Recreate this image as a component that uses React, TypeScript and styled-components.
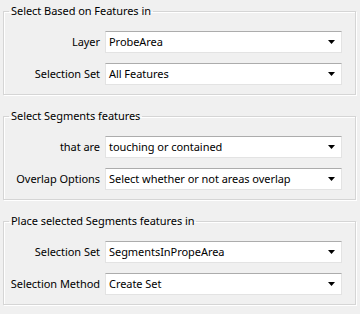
import React from "react";
import styled, { createGlobalStyle } from "styled-components";

const Global = createGlobalStyle`
  html, body { margin: 0; padding: 0; background: #f0f0f0; }
  body { font-family: "Noto Sans", "Open Sans", sans-serif; font-size: 11px; letter-spacing: -0.05px; color: #000; }
`;

const Page = styled.div`
  width: 360px;
  height: 314px;
  box-sizing: border-box;
  padding: 3px 4px 0 3px;
  display: flex;
  flex-direction: column;
  gap: 13px;
  background: #f0f0f0;
  overflow: hidden;
`;

const Group = styled.fieldset`
  margin: 0;
  padding: 12px 13px 13px 0;
  border: 1px solid #d5d5d5;
  box-shadow: inset 1px 1px 0 #fff, 1px 1px 0 #fff;
  min-width: 0;
  height: 92px;
  box-sizing: border-box;
`;

const Title = styled.legend`
  margin-left: 5px;
  padding: 0 2px;
  line-height: 16px;
`;

const Form = styled.div`
  display: grid;
  grid-template-columns: 96px 1fr;
  column-gap: 5px;
  row-gap: 10px;
  align-items: center;
`;

const Label = styled.span`
  text-align: right;
  white-space: nowrap;
  line-height: 22px;
`;

const Select = styled.div`
  position: relative;
  height: 22px;
  box-sizing: border-box;
  background: #fff;
  border: 1px solid #e3e3e3;
  border-top-color: #acacac;
  padding: 0 20px 0 3px;
  line-height: 20px;
  white-space: nowrap;
  overflow: hidden;
`;

const Arrow = styled.svg`
  position: absolute;
  right: 6px;
  top: 8px;
`;

type Field = { label: string; value: string };

const groups: { title: string; fields: Field[] }[] = [
  {
    title: "Select Based on Features in",
    fields: [
      { label: "Layer", value: "ProbeArea" },
      { label: "Selection Set", value: "All Features" },
    ],
  },
  {
    title: "Select Segments features",
    fields: [
      { label: "that are", value: "touching or contained" },
      { label: "Overlap Options", value: "Select whether or not areas overlap" },
    ],
  },
  {
    title: "Place selected Segments features in",
    fields: [
      { label: "Selection Set", value: "SegmentsInPropeArea" },
      { label: "Selection Method", value: "Create Set" },
    ],
  },
];

export default function App() {
  return (
    <>
      <Global />
      <Page>
        {groups.map((g) => (
          <Group key={g.title}>
            <Title>{g.title}</Title>
            <Form>
              {g.fields.map((f) => (
                <React.Fragment key={f.label}>
                  <Label>{f.label}</Label>
                  <Select>
                    {f.value}
                    <Arrow width="7" height="4" viewBox="0 0 7 4">
                      <path d="M0 0H7L3.5 4Z" fill="#000" />
                    </Arrow>
                  </Select>
                </React.Fragment>
              ))}
            </Form>
          </Group>
        ))}
      </Page>
    </>
  );
}
